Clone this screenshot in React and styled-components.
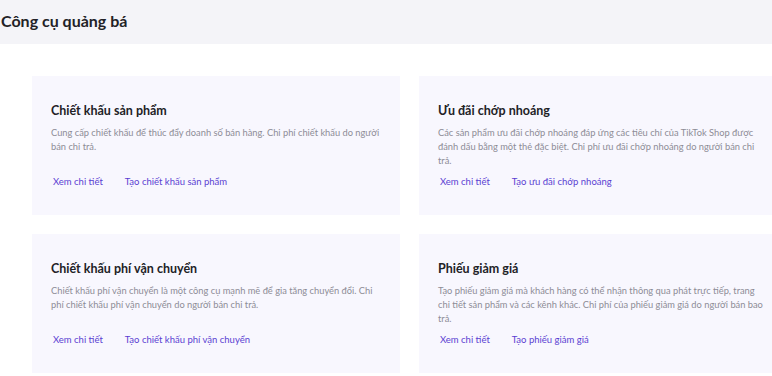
import React from "react";
import styled, { createGlobalStyle } from "styled-components";

const GlobalStyle = createGlobalStyle`
  body {
    margin: 0;
    background: #ffffff;
    font-family: "Lato", "Noto Sans", sans-serif;
    overflow: hidden;
  }
`;

const tools = [
  {
    title: "Chiết khấu sản phẩm",
    lines: [
      "Cung cấp chiết khấu để thúc đẩy doanh số bán hàng. Chi phí chiết khấu do người",
      "bán chi trả.",
    ],
    action: "Tạo chiết khấu sản phẩm",
  },
  {
    title: "Ưu đãi chớp nhoáng",
    lines: [
      "Các sản phẩm ưu đãi chớp nhoáng đáp ứng các tiêu chí của TikTok Shop được",
      "đánh dấu bằng một thẻ đặc biệt. Chi phí ưu đãi chớp nhoáng do người bán chi",
      "trả.",
    ],
    action: "Tạo ưu đãi chớp nhoáng",
  },
  {
    title: "Chiết khấu phí vận chuyển",
    lines: [
      "Chiết khấu phí vận chuyển là một công cụ mạnh mẽ để gia tăng chuyển đổi. Chi",
      "phí chiết khấu phí vận chuyển do người bán chi trả.",
    ],
    action: "Tạo chiết khấu phí vận chuyển",
  },
  {
    title: "Phiếu giảm giá",
    lines: [
      "Tạo phiếu giảm giá mà khách hàng có thể nhận thông qua phát trực tiếp, trang",
      "chi tiết sản phẩm và các kênh khác. Chi phí của phiếu giảm giá do người bán bao",
      "trả.",
    ],
    action: "Tạo phiếu giảm giá",
  },
];

function App() {
  return (
    <Page>
      <GlobalStyle />
      <Header>
        <h1>Công cụ quảng bá</h1>
      </Header>
      <Grid>
        {tools.map((t) => (
          <Card key={t.title}>
            <Title>{t.title}</Title>
            <Desc>
              {t.lines.map((line) => (
                <span key={line}>{line}</span>
              ))}
            </Desc>
            <Links>
              <Action href="#">Xem chi tiết</Action>
              <Action href="#">{t.action}</Action>
            </Links>
          </Card>
        ))}
      </Grid>
    </Page>
  );
}

export default App;

const Page = styled.div`
  width: 772px;
  height: 376px;
  overflow: hidden;
`;

const Header = styled.div`
  height: 44px;
  background: #f4f4f8;
  display: flex;
  align-items: center;
  h1 {
    margin: 0 0 4px 1px;
    font-size: 16px;
    font-weight: 700;
    color: #222226;
  }
`;

const Grid = styled.div`
  display: grid;
  grid-template-columns: 368px 368px;
  column-gap: 19px;
  row-gap: 19px;
  padding: 32px 0 0 32px;
`;

const Card = styled.div`
  background: #f8f7fe;
  padding: 27px 14px 26px 19px;
  height: 139px;
  box-sizing: border-box;
`;

const Title = styled.div`
  font-size: 12.5px;
  font-weight: 700;
  color: #222226;
  line-height: 16px;
`;

const Desc = styled.p`
  margin: 7px 0 0;
  font-size: 9.3px;
  line-height: 14px;
  color: #8d8c96;
  min-height: 42px;
  display: flex;
  flex-direction: column;
  span {
    white-space: nowrap;
  }
`;

const Links = styled.div`
  display: flex;
  gap: 22px;
  margin-top: 7px;
  padding-left: 2px;
`;

const Action = styled.a`
  font-size: 9.5px;
  line-height: 14px;
  color: #5b3fd2;
  text-decoration: none;
`;
